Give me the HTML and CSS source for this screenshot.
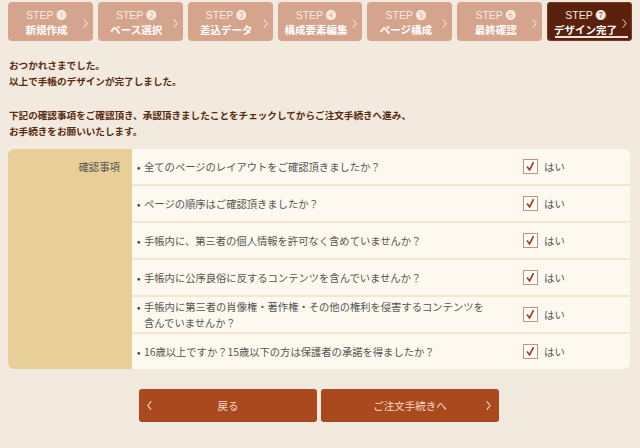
FILE: index.html
```html
<!DOCTYPE html>
<html lang="ja">
<head>
<meta charset="utf-8">
<link rel="stylesheet" href="styles.css">
</head>
<body>
<nav class="steps">
  <div class="step"><span class="step-no">STEP ❶</span><span class="step-name">新規作成</span><svg class="chev" viewBox="0 0 6 12"><polyline points="1,1 5,6 1,11"/></svg></div>
  <div class="step"><span class="step-no">STEP ❷</span><span class="step-name">ベース選択</span><svg class="chev" viewBox="0 0 6 12"><polyline points="1,1 5,6 1,11"/></svg></div>
  <div class="step"><span class="step-no">STEP ❸</span><span class="step-name">差込データ</span><svg class="chev" viewBox="0 0 6 12"><polyline points="1,1 5,6 1,11"/></svg></div>
  <div class="step"><span class="step-no">STEP ❹</span><span class="step-name">構成要素編集</span><svg class="chev" viewBox="0 0 6 12"><polyline points="1,1 5,6 1,11"/></svg></div>
  <div class="step"><span class="step-no">STEP ❺</span><span class="step-name">ページ構成</span><svg class="chev" viewBox="0 0 6 12"><polyline points="1,1 5,6 1,11"/></svg></div>
  <div class="step"><span class="step-no">STEP ❻</span><span class="step-name">最終確認</span><svg class="chev" viewBox="0 0 6 12"><polyline points="1,1 5,6 1,11"/></svg></div>
  <div class="step active"><span class="step-no">STEP ❼</span><span class="step-name">デザイン完了</span><svg class="chev" viewBox="0 0 6 12"><polyline points="1,1 5,6 1,11"/></svg></div>
</nav>

<div class="intro">
  <p>おつかれさまでした。<br>以上で手帳のデザインが完了しました。</p>
  <p>下記の確認事項をご確認頂き、承認頂きましたことをチェックしてからご注文手続きへ進み、<br>お手続きをお願いいたします。</p>
</div>

<div class="confirm">
  <div class="confirm-head">確認事項</div>
  <div class="confirm-body">
    <div class="row"><div class="q"><span class="dot">•</span><span>全てのページのレイアウトをご確認頂きましたか？</span></div><label class="ans"><span class="box"><svg viewBox="0 0 15 15"><polyline points="3.5,7.5 6.5,11.5 11,2.5"/></svg></span>はい</label></div>
    <div class="row"><div class="q"><span class="dot">•</span><span>ページの順序はご確認頂きましたか？</span></div><label class="ans"><span class="box"><svg viewBox="0 0 15 15"><polyline points="3.5,7.5 6.5,11.5 11,2.5"/></svg></span>はい</label></div>
    <div class="row"><div class="q"><span class="dot">•</span><span>手帳内に、第三者の個人情報を許可なく含めていませんか？</span></div><label class="ans"><span class="box"><svg viewBox="0 0 15 15"><polyline points="3.5,7.5 6.5,11.5 11,2.5"/></svg></span>はい</label></div>
    <div class="row"><div class="q"><span class="dot">•</span><span>手帳内に公序良俗に反するコンテンツを含んでいませんか？</span></div><label class="ans"><span class="box"><svg viewBox="0 0 15 15"><polyline points="3.5,7.5 6.5,11.5 11,2.5"/></svg></span>はい</label></div>
    <div class="row"><div class="q"><span class="dot">•</span><span>手帳内に第三者の肖像権・著作権・その他の権利を侵害するコンテンツを<br>含んでいませんか？</span></div><label class="ans"><span class="box"><svg viewBox="0 0 15 15"><polyline points="3.5,7.5 6.5,11.5 11,2.5"/></svg></span>はい</label></div>
    <div class="row"><div class="q"><span class="dot">•</span><span>16歳以上ですか？15歳以下の方は保護者の承諾を得ましたか？</span></div><label class="ans"><span class="box"><svg viewBox="0 0 15 15"><polyline points="3.5,7.5 6.5,11.5 11,2.5"/></svg></span>はい</label></div>
  </div>
</div>

<div class="actions">
  <button class="btn"><svg class="bchev left" viewBox="0 0 6 12"><polyline points="5,1 1,6 5,11"/></svg>戻る</button>
  <button class="btn"><span>ご注文手続きへ</span><svg class="bchev right" viewBox="0 0 6 12"><polyline points="1,1 5,6 1,11"/></svg></button>
</div>
</body>
</html>
```

FILE: styles.css
```css
* { box-sizing: border-box; }
html, body { margin: 0; padding: 0; }
body {
  background: #f2eadf;
  font-family: "Noto Sans CJK JP", "Noto Sans", sans-serif;
  width: 640px;
  height: 448px;
  overflow: hidden;
}

.steps {
  display: flex;
  gap: 5px;
  padding: 2px 8px 0 8px;
}
.step {
  position: relative;
  flex: 1;
  height: 39px;
  background: #d5a48c;
  border-radius: 4px;
  display: flex;
  flex-direction: column;
  align-items: center;
  padding: 6px 8px 0 0;
  color: #fff;
}
.step-no {
  font-family: "Liberation Sans", "Noto Sans CJK JP", sans-serif;
  font-size: 10.5px;
  line-height: 14px;
  color: #fbeae0;
}
.step-name {
  font-size: 10.5px;
  font-weight: bold;
  line-height: 16px;
  white-space: nowrap;
}
.chev {
  position: absolute;
  right: 5px;
  top: 16px;
  width: 5px;
  height: 11px;
  fill: none;
  stroke: #fff;
  stroke-width: 1;
}
.step.active {
  background: #5a220d;
  box-shadow: inset 0 0 0 1px #7a3a22;
}
.step.active::after {
  content: "";
  position: absolute;
  left: 8px;
  right: 4px;
  bottom: 3px;
  height: 2px;
  background: #f4e6dc;
}

.intro {
  padding: 16px 8px 0 9px;
  color: #5a2a0e;
  font-size: 9.6px;
  font-weight: bold;
  line-height: 16px;
}
.intro p { margin: 0 0 18px 0; }
.intro p:last-child { margin-bottom: 0; }

.confirm {
  display: flex;
  margin: 10px 10px 0 8px;
  border-radius: 6px;
  overflow: hidden;
  background: #fdf9ee;
}
.confirm-head {
  width: 124px;
  flex: none;
  background: #e8cf98;
  color: #555;
  font-size: 10.4px;
  text-align: right;
  padding: 10px 12px 0 0;
  line-height: 16px;
}
.confirm-body { flex: 1; }
.row {
  display: grid;
  grid-template-columns: 1fr 107px;
  align-items: center;
  min-height: 37px;
  border-bottom: 2px solid #f3e7cd;
  padding-left: 5px;
}
.row:last-child { border-bottom: none; min-height: 35px; }
.q {
  display: flex;
  font-size: 10.3px;
  line-height: 16px;
  color: #555;
  padding-right: 20px;
}
.dot { width: 7px; flex: none; font-size: 10px; color: #333; }
.ans {
  display: flex;
  align-items: center;
  font-size: 10.4px;
  color: #555;
  gap: 6px;
}
.box {
  width: 15px;
  height: 15px;
  border: 1px solid #c9927b;
  background: #fff;
  display: inline-flex;
}
.box svg {
  width: 13px;
  height: 13px;
  fill: none;
  stroke: #a8401a;
  stroke-width: 2;
  stroke-linejoin: round;
}

.actions {
  display: flex;
  justify-content: center;
  gap: 4px;
  padding: 20px 0 0 0;
  margin-left: -2px;
}
.btn {
  position: relative;
  width: 178px;
  height: 33px;
  border: none;
  border-radius: 3px;
  background: #a9491d;
  color: #f6dccb;
  font-family: "Noto Sans CJK JP", sans-serif;
  font-size: 10.5px;
  padding: 0;
}
.bchev {
  position: absolute;
  top: 11px;
  width: 5px;
  height: 11px;
  fill: none;
  stroke: #f6dccb;
  stroke-width: 1.3;
}
.bchev.left { left: 8px; }
.bchev.right { right: 8px; }
```
